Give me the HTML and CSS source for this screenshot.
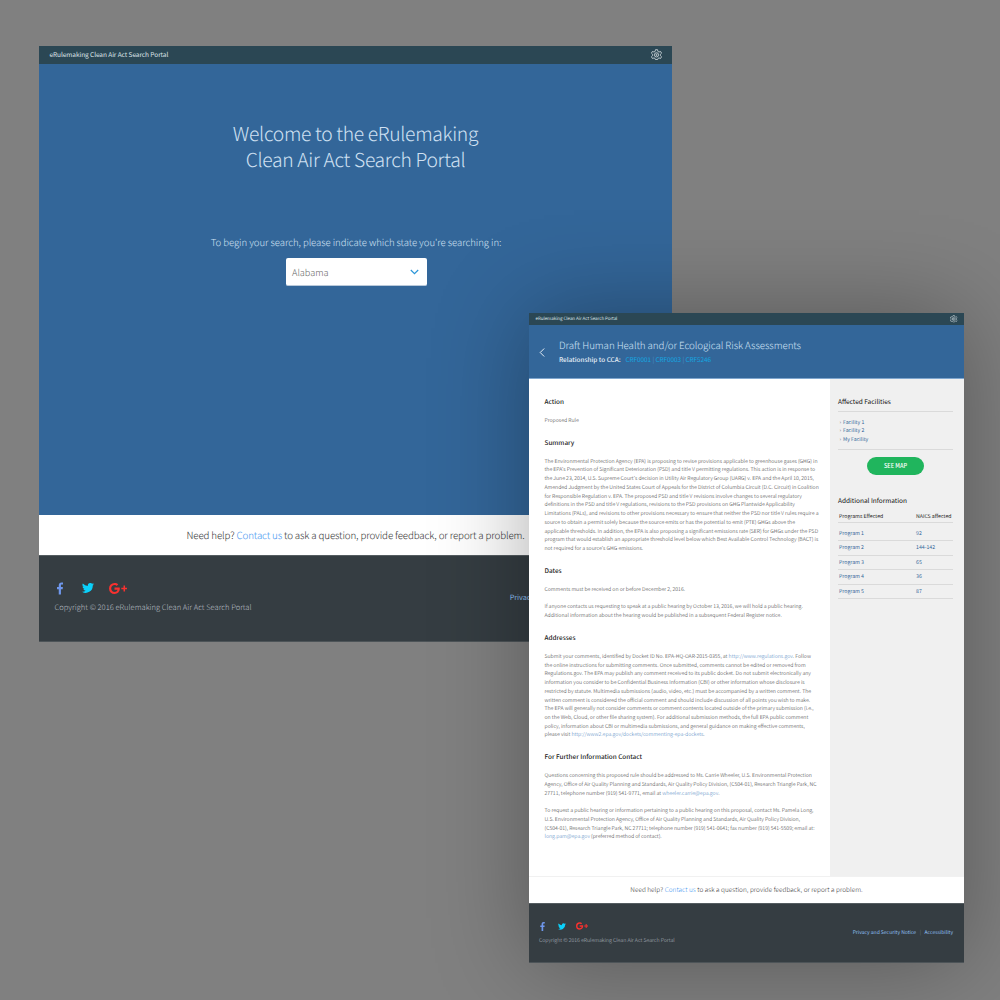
FILE: index.html
```html
<!DOCTYPE html>
<html lang="en">
<head>
<meta charset="utf-8">
<title>eRulemaking Clean Air Act Search Portal</title>
<link rel="stylesheet" href="styles.css">
</head>
<body>
<svg class="defs" width="0" height="0">
  <symbol id="gear" viewBox="0 0 24 24"><g fill="none" stroke="currentColor" stroke-width="1.700" stroke-linejoin="round"><path d="M9.800 1.500h4.400l.8 3.700 2.400 1.400 3.500-1.200 2.200 3.800-2.700 2.400v2.800l2.700 2.400-2.200 3.800-3.500-1.200-2.400 1.400-.6 2.200H9.600L9 20.800l-2.400-1.400-3.500 1.200-2.200-3.800 2.700-2.400v-2.800L.9 9.200l2.200-3.800 3.500 1.200L9 5.200z"/><circle cx="12" cy="12.800" r="4.600"/><circle cx="12" cy="12.800" r="1.300"/></g></symbol>
  <symbol id="facebook" viewBox="0 0 12 24"><path fill="#6f97ec" d="M3.500 24V13.300H0V9h3.500V5.900C3.500 2.200 5.700 0 9 0c1.300 0 2.500.1 3 .2V4H9.900C8.200 4 7.900 4.800 7.900 6v3h3.900l-.5 4.300H7.900V24z"/></symbol>
  <symbol id="twitter" viewBox="0 0 24 20"><path fill="#0bd0fa" d="M24 2.400a10 10 0 0 1-2.800.8A5 5 0 0 0 23.300.5a10 10 0 0 1-3.100 1.200 4.900 4.900 0 0 0-8.400 4.500A14 14 0 0 1 1.700 1a4.900 4.900 0 0 0 1.500 6.600A5 5 0 0 1 1 7v.1a4.900 4.900 0 0 0 3.900 4.800 5 5 0 0 1-2.200.1 4.900 4.900 0 0 0 4.600 3.400A10 10 0 0 1 0 17.400 14 14 0 0 0 21.500 5a10 10 0 0 0 2.500-2.600z"/></symbol>
  <symbol id="gplus" viewBox="0 0 36 22"><path fill="#f8312f" d="M11 9v4.300h6c-.3 1.600-1.900 4.600-6 4.600-3.600 0-6.600-3-6.600-6.900s3-6.900 6.600-6.900c2.100 0 3.500.9 4.300 1.700l3.200-3.200C16.500.9 14 0 11 0a11 11 0 1 0 0 22c6.300 0 10.600-4.500 10.600-10.800 0-.9-.1-1.500-.2-2.200zM29 5v4.300h-4.400v3.200H29v4.400h3.100v-4.400H36V9.300h-3.900V5z"/></symbol>
</svg>

<main class="desktop">
  <section class="window search">
    <header class="topbar">
      <span class="brand">eRulemaking Clean Air Act Search Portal</span>
      <svg class="gear"><use href="#gear"/></svg>
    </header>
    <div class="hero">
      <h1 class="welcome"><span>Welcome to the eRulemaking</span><span>Clean Air Act Search Portal</span></h1>
      <p class="prompt">To begin your search, please indicate which state you're searching in:</p>
      <div class="select"><span>Alabama</span><svg class="chevron" viewBox="0 0 9 6"><path d="M.8 1l3.700 3.700L8.200 1" fill="none" stroke="#2b96d8" stroke-width="1.200"/></svg></div>
    </div>
    <p class="help"><span>Need help? <a>Contact us</a> to ask a question, provide feedback, or report a problem.</span></p>
    <footer class="footer">
      <div class="about">
        <div class="social"><svg class="fb"><use href="#facebook"/></svg><svg class="tw"><use href="#twitter"/></svg><svg class="gp"><use href="#gplus"/></svg></div>
        <span class="copyright">Copyright © 2016 eRulemaking Clean Air Act Search Portal</span>
      </div>
      <div class="legal"><a>Privacy and Security Notice</a><i>|</i><a>Accessibility</a></div>
    </footer>
  </section>

  <section class="window detail">
    <header class="topbar">
      <span class="brand">eRulemaking Clean Air Act Search Portal</span>
      <svg class="gear"><use href="#gear"/></svg>
    </header>
    <div class="titlebar">
      <svg class="back" viewBox="0 0 6 9"><path d="M5.200.5L1.200 4.500l4 4" fill="none" stroke="#e6eef6" stroke-width="1"/></svg>
      <div>
        <h1 class="title">Draft Human Health and/or Ecological Risk Assessments</h1>
        <p class="relation"><b>Relationship to CCA:</b><span class="codes">CRF0001 <i>|</i> CRF0003 <i>|</i> CRF5246</span></p>
      </div>
    </div>
    <div class="body">
      <article class="article">
        <h2>Action</h2>
        <p>Proposed Rule</p>
        <h2>Summary</h2>
        <p>The Environmental Protection Agency (EPA) is proposing to revise provisions applicable to greenhouse gases (GHG) in<br>
        the EPA's Prevention of Significant Deterioration (PSD) and title V permitting regulations. This action is in response to<br>
        the June 23, 2014, U.S. Supreme Court's decision in Utility Air Regulatory Group (UARG) v. EPA and the April 10, 2015,<br>
        Amended Judgment by the United States Court of Appeals for the District of Columbia Circuit (D.C. Circuit) in Coalition<br>
        for Responsible Regulation v. EPA. The proposed PSD and title V revisions involve changes to several regulatory<br>
        definitions in the PSD and title V regulations, revisions to the PSD provisions on GHG Plantwide Applicability<br>
        Limitations (PALs), and revisions to other provisions necessary to ensure that neither the PSD nor title V rules require a<br>
        source to obtain a permit solely because the source emits or has the potential to emit (PTE) GHGs above the<br>
        applicable thresholds. In addition, the EPA is also proposing a significant emissions rate (SER) for GHGs under the PSD<br>
        program that would establish an appropriate threshold level below which Best Available Control Technology (BACT) is<br>
        not required for a source's GHG emissions.</p>
        <h2>Dates</h2>
        <p>Comments must be received on or before December 2, 2016.</p>
        <p>If anyone contacts us requesting to speak at a public hearing by October 13, 2016, we will hold a public hearing.<br>
        Additional information about the hearing would be published in a subsequent Federal Register notice.</p>
        <h2>Addresses</h2>
        <p>Submit your comments, identified by Docket ID No. EPA-HQ-OAR-2015-0355, at <a>http://www.regulations.gov</a>. Follow<br>
        the online instructions for submitting comments. Once submitted, comments cannot be edited or removed from<br>
        Regulations.gov. The EPA may publish any comment received to its public docket. Do not submit electronically any<br>
        information you consider to be Confidential Business Information (CBI) or other information whose disclosure is<br>
        restricted by statute. Multimedia submissions (audio, video, etc.) must be accompanied by a written comment. The<br>
        written comment is considered the official comment and should include discussion of all points you wish to make.<br>
        The EPA will generally not consider comments or comment contents located outside of the primary submission (i.e.,<br>
        on the Web, Cloud, or other file sharing system). For additional submission methods, the full EPA public comment<br>
        policy, information about CBI or multimedia submissions, and general guidance on making effective comments,<br>
        please visit <a>http://www2.epa.gov/dockets/commenting-epa-dockets</a>.</p>
        <h2>For Further Information Contact</h2>
        <p>Questions concerning this proposed rule should be addressed to Ms. Carrie Wheeler, U.S. Environmental Protection<br>
        Agency, Office of Air Quality Planning and Standards, Air Quality Policy Division, (C504-01), Research Triangle Park, NC<br>
        27711, telephone number (919) 541-9771, email at <a>wheeler.carrie@epa.gov</a>.</p>
        <p>To request a public hearing or information pertaining to a public hearing on this proposal, contact Ms. Pamela Long,<br>
        U.S. Environmental Protection Agency, Office of Air Quality Planning and Standards, Air Quality Policy Division,<br>
        (C504-01), Research Triangle Park, NC 27711; telephone number (919) 541-0641; fax number (919) 541-5509; email at:<br>
        <a>long.pam@epa.gov</a> (preferred method of contact).</p>
      </article>
      <aside class="sidebar">
        <h2>Affected Facilities</h2>
        <ul class="facilities">
          <li>Facility 1</li>
          <li>Facility 2</li>
          <li>My Facility</li>
        </ul>
        <button class="map">SEE MAP</button>
        <h2>Additional Information</h2>
        <div class="programs">
          <div class="row head"><span>Programs Effected</span><span>NAICS affected</span></div>
          <div class="row"><span>Program 1</span><span>92</span></div>
          <div class="row"><span>Program 2</span><span>144-142</span></div>
          <div class="row"><span>Program 3</span><span>65</span></div>
          <div class="row"><span>Program 4</span><span>36</span></div>
          <div class="row"><span>Program 5</span><span>87</span></div>
        </div>
      </aside>
    </div>
    <p class="help"><span>Need help? <a>Contact us</a> to ask a question, provide feedback, or report a problem.</span></p>
    <footer class="footer">
      <div class="about">
        <div class="social"><svg class="fb"><use href="#facebook"/></svg><svg class="tw"><use href="#twitter"/></svg><svg class="gp"><use href="#gplus"/></svg></div>
        <span class="copyright">Copyright © 2016 eRulemaking Clean Air Act Search Portal</span>
      </div>
      <div class="legal"><a>Privacy and Security Notice</a><i>|</i><a>Accessibility</a></div>
    </footer>
  </section>
</main>
</body>
</html>
```
FILE: styles.css
```css
* { box-sizing: border-box; margin: 0; padding: 0; }
body { background: #808080; font-family: "Noto Sans CJK SC", "Open Sans", sans-serif; font-weight: 300; text-rendering: geometricPrecision; }
h1, h2 { font-weight: 300; }
i { font-style: normal; }
.defs { position: absolute; }
.desktop { position: relative; width: 1000px; height: 1000px; overflow: hidden; }
.window { position: absolute; display: flex; flex-direction: column; white-space: nowrap; overflow: hidden; }
.search { left: 39px; top: 46px; width: 633px; height: 596px; }
.detail { left: 529px; top: 313px; width: 435px; height: 650px; box-shadow: 0 0 90px rgba(0, 0, 0, .32); }

.topbar { display: flex; align-items: center; justify-content: space-between; background: #2b4754; color: #dde4e8; flex: none; }
.search .topbar { height: 18px; padding: 0 10.500px 1px; font-size: 6.500px; letter-spacing: -.06px; font-weight: 400; }
.search .brand { margin-top: -1px; }
.search .gear { width: 11px; height: 11px; }
.detail .topbar { height: 12px; padding: 0 6.500px; font-size: 4.500px; letter-spacing: -.05px; font-weight: 400; }
.detail .gear { width: 7.500px; height: 7.500px; }

.hero { height: 451px; background: #336699; display: flex; flex-direction: column; align-items: center; padding-top: 56px; color: #cfe0f2; }
.welcome { font-size: 19.300px; line-height: 26px; letter-spacing: -.32px; text-align: center; }
.welcome span { display: block; }
.prompt { font-size: 9.600px; line-height: 16px; letter-spacing: -.06px; margin-top: 62px; padding-left: 1px; }
.select { display: flex; align-items: center; justify-content: space-between; width: 141px; height: 28px; margin: 8px 0 0 1px; padding: 0 8px 0 6.500px; background: #fff; border-radius: 2px; border-bottom: 1px solid #b9c9da; color: #666; font-size: 9.200px; }
.chevron { width: 9px; height: 6px; }

.help { display: flex; align-items: center; justify-content: center; background: #fff; color: #333; flex: none; }
.help a { color: #3f95f0; }
.search .help { height: 40px; font-size: 9.800px; letter-spacing: -.15px; padding-bottom: .5px; }
.detail .help { height: 27px; font-size: 6.450px; letter-spacing: .03px; padding-bottom: 1.500px; border-top: 1px solid #f1f1f1; }

.footer { display: flex; justify-content: space-between; background: #353d42; color: #b8bfc4; border-bottom: 1px solid #4d5458; border-top: 1px solid #555d61; flex: none; }
.social { display: flex; align-items: center; }
.legal { display: flex; color: #8fc0f5; }
.legal i { color: #697279; }
.search .footer { height: 87px; padding: 26px 15px 0 15.500px; font-size: 7.580px; }
.search .social { height: 12px; padding-left: 2px; }
.search .fb { width: 6px; height: 13px; }
.search .tw { width: 12px; height: 10px; margin-left: 19px; }
.search .gp { width: 18px; height: 11px; margin-left: 15px; }
.copyright { display: block; }
.search .copyright { line-height: 12px; margin-top: 8px; }
.search .legal { font-size: 7.250px; padding-top: 10px; line-height: 12px; gap: 6px; font-weight: 400; }
.detail .footer { height: 60px; padding: 16px 11px 0 10px; font-size: 5.220px; }
.detail .social { height: 12px; padding-left: 1px; }
.detail .fb { width: 5px; height: 9px; }
.detail .tw { width: 8px; height: 7px; margin-left: 13px; }
.detail .gp { width: 12px; height: 8px; margin-left: 10px; }
.detail .copyright { line-height: 8px; margin-top: 4px; }
.detail .legal { font-size: 5px; line-height: 8px; padding-top: 9px; gap: 3.500px; font-weight: 400; }

.titlebar { display: flex; height: 54px; background: #336699; border-bottom: 1px solid #7fa6ce; padding: 12px 10px 0; color: #cfe2f5; flex: none; }
.back { width: 6px; height: 9px; margin: 11px 14px 0 0; }
.title { font-size: 9.800px; line-height: 16px; letter-spacing: -.08px; }
.relation { display: flex; font-size: 6.400px; line-height: 14px; gap: 5px; }
.relation b { font-weight: 500; color: #e8f0f8; }
.codes { color: #14a6e2; font-weight: 400; letter-spacing: -.05px; }
.codes i { color: #4a8fc5; }

.body { display: flex; height: 497px; background: #fff; flex: none; }
.article { width: 301px; padding: 17.700px 0 0 15.500px; color: #333; font-size: 5.210px; line-height: 8.740px; }
.article h2 { font-size: 6.400px; line-height: 10px; font-weight: 500; color: #222; margin-bottom: 9.200px; }
.article p + h2 { margin-top: 12.900px; }
.article p + p { margin-top: 8.740px; }
.article a { color: #4a84c0; }
.sidebar { flex: 1; background: #f0f0f0; padding: 17px 11px 0 8px; color: #336699; font-size: 5.200px; font-weight: 400; }
.sidebar h2 { font-size: 6.500px; line-height: 10px; font-weight: 400; color: #111; }
.facilities { list-style: none; margin-top: 5px; padding: 6.500px 0 4px 5px; border: solid #dadada; border-width: 1px 0; line-height: 8.720px; }
.facilities li::before { content: "›"; color: #777; position: absolute; margin-left: -3.500px; }
.map { display: block; width: 57px; height: 18px; margin: 7.500px auto 20px; border: 0; border-radius: 9px; background: #20b55d; color: #fff; font: 500 5.600px "Noto Sans CJK SC", sans-serif; }
.row { display: grid; grid-template-columns: 77px 1fr; height: 14.500px; line-height: 14px; padding-left: 1px; border-bottom: 1px solid #dadada; }
.row.head { color: #222; line-height: 23px; height: 17.500px; }
.row.head + .row { height: 18.500px; line-height: 22px; }
```
